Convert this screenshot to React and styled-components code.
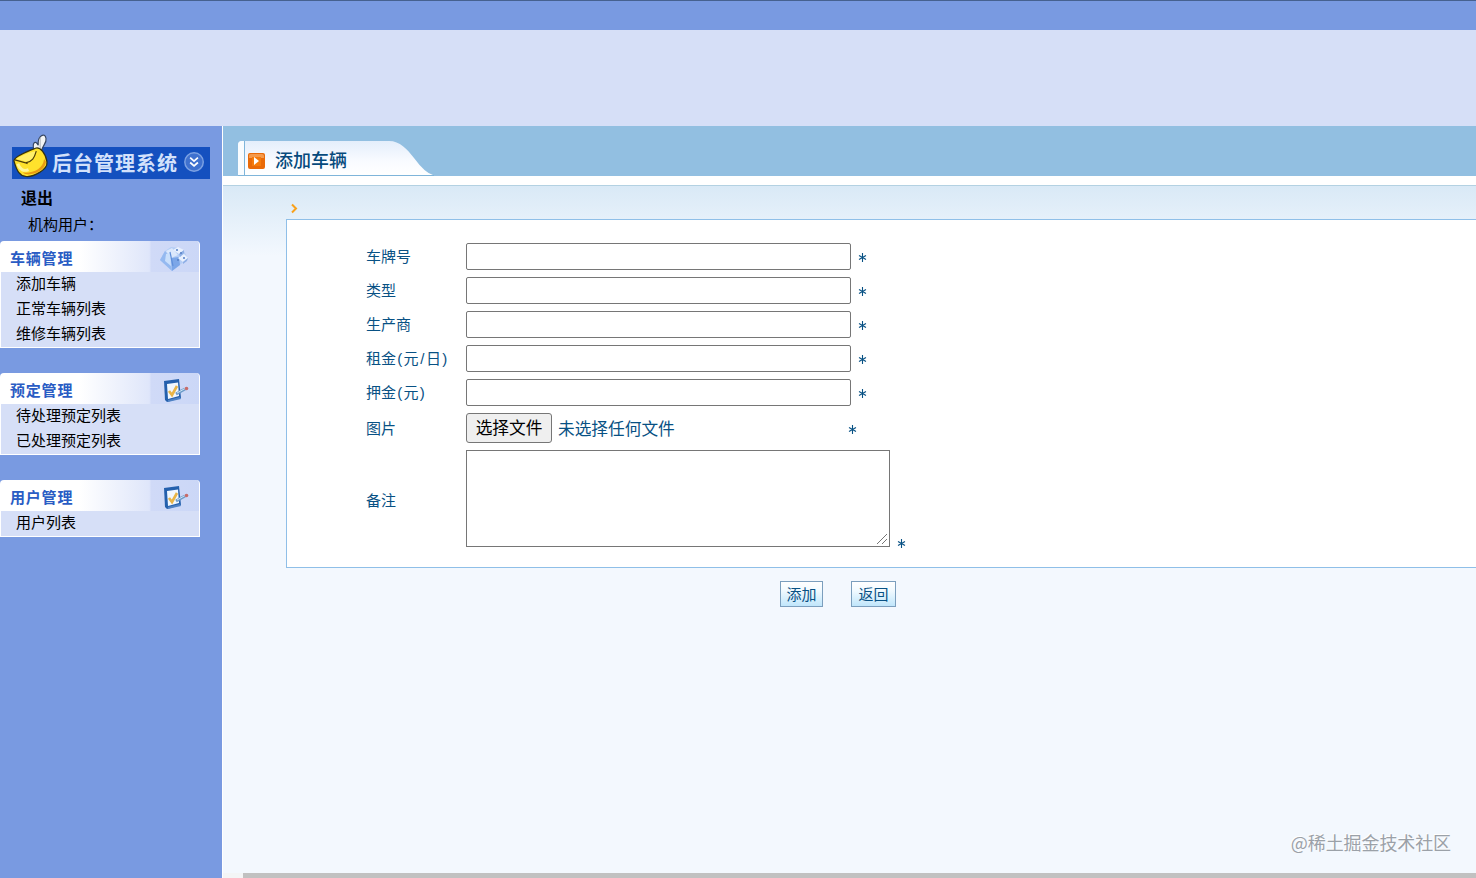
import React from "react";
import styled, { createGlobalStyle } from "styled-components";

const GlobalStyle = createGlobalStyle`
  * {
    box-sizing: border-box;
  }

  body {
    margin: 0;
    overflow: hidden;
    background: #f3f8fe;
    font-family: "Liberation Sans", "Noto Sans CJK SC", sans-serif;
    font-size: 15px;
    color: #000;
  }
`;

const Page = styled.div`
  display: flex;
  flex-direction: column;
  width: 100%;
  height: 100vh;
`;

const TopBar = styled.div`
  flex: none;
  height: 30px;
  border-top: 1px solid #46618f;
  background: #799ae1;
`;

const Banner = styled.div`
  flex: none;
  height: 96px;
  background: #d6dff7;
`;

const Columns = styled.div`
  display: flex;
  flex: 1;
  min-height: 0;
`;

/* sidebar */

const Sidebar = styled.aside`
  flex: none;
  width: 223px;
  padding-top: 7px;
  border-right: 1px solid #fff;
  background: #799ae1;
`;

const Logo = styled.div`
  display: flex;
  align-items: flex-end;
  width: 198px;
  height: 46px;
  margin-left: 12px;
  background: linear-gradient(#1450bf, #1450bf) 0 14px / 198px 32px no-repeat;
`;

const LogoText = styled.span`
  flex: 1;
  padding-left: 3px;
  line-height: 32px;
  font-family: "Noto Sans CJK SC", sans-serif;
  font-size: 20px;
  font-weight: bold;
  letter-spacing: 1px;
  white-space: nowrap;
  color: #d3e1fb;
`;

const Exit = styled.div`
  height: 36px;
  padding-left: 21px;
  line-height: 39px;
  font-size: 16px;
  font-weight: bold;
`;

const OrgUser = styled.div`
  height: 26px;
  padding-left: 28px;
  line-height: 20px;
`;

const Group = styled.section`
  width: 200px;
  margin-bottom: 25px;
`;

const GroupHead = styled.div`
  display: flex;
  align-items: center;
  justify-content: space-between;
  height: 31px;
  padding: 4px 10px 0;
  border-right: 1px solid #fff;
  border-radius: 4px 4px 0 0;
  background: linear-gradient(90deg, #fff 0, #fff 40%, #dfe6fa 75%, #d0daf7 76%, #cbd7f7 100%);
`;

const GroupTitle = styled.span`
  padding-bottom: 2px;
  font-weight: bold;
  letter-spacing: 0.8px;
  color: #2a5cc4;
`;

const GroupBody = styled.div`
  padding-left: 15px;
  border: 1px solid #fff;
  border-top: 0;
  background: #d6dff7;
`;

const MenuItem = styled.div`
  height: 25px;
  line-height: 24px;
`;

/* right side */

const Main = styled.main`
  display: flex;
  flex: 1;
  flex-direction: column;
  min-width: 0;
  background: linear-gradient(#d9e9f6, #f3f8fe 70px) 0 60px no-repeat #f3f8fe;
`;

const TabBar = styled.div`
  flex: none;
  height: 50px;
  padding: 15px 0 0 15px;
  background: #92bfe1;
`;

const Tab = styled.div`
  display: grid;
  width: 200px;
  height: 35px;

  > * {
    grid-area: 1 / 1;
  }
`;

const TabTitle = styled.div`
  display: flex;
  align-items: center;
  gap: 10px;
  padding: 3px 0 0 10px;
  font-size: 18px;
  font-weight: 500;
  font-family: "Noto Sans CJK SC", sans-serif;
  line-height: 30px;
  color: #064a7c;

  span {
    padding-bottom: 2px;
  }
`;

const Rule = styled.div`
  flex: none;
  height: 10px;
  border-bottom: 1px solid #b3d1e2;
  background: #fff;
`;

const Crumb = styled.div`
  flex: none;
  height: 33px;
  padding: 17px 0 0 67px;
  line-height: 0;
`;

const Panel = styled.form`
  flex: none;
  height: 349px;
  margin-left: 63px;
  padding: 19px 0 0 79px;
  border: 1px solid #8fbfe8;
  border-right: 0;
  background: #fff;
  color: #085184;
`;

const Row = styled.div`
  display: flex;
  align-items: center;
  height: ${(p) => p.$height || 34}px;
`;

const Label = styled.label`
  flex: none;
  width: 100px;
  padding-bottom: ${(p) => (p.$low ? 0 : 2)}px;
  padding-top: ${(p) => (p.$low ? 2 : 0)}px;
  white-space: nowrap;
`;

const Half = styled.span`
  display: inline-block;
  width: 7.5px;
  text-align: center;
`;

const TextInput = styled.input`
  width: 385px;
  height: 27px;
  border: 1px solid #767676;
  border-radius: 2px;
  background: #fff;
  outline: 0;
`;

const FileField = styled.div`
  display: flex;
  align-items: center;
  gap: 6px;
  width: 375px;
  font-size: 16.7px;
`;

const FileButton = styled.button`
  width: 86px;
  height: 30px;
  padding: 0 0 2px;
  border: 1px solid #767676;
  border-radius: 3px;
  background: #efefef;
  font: inherit;
  color: #000;
`;

const TextArea = styled.textarea`
  width: 424px;
  height: 97px;
  border: 1px solid #767676;
  background: #fff;
  outline: 0;
  resize: both;

  &::-webkit-resizer {
    background: linear-gradient(
      135deg,
      transparent 47%,
      #767676 47%,
      #767676 53%,
      transparent 53%,
      transparent 72%,
      #767676 72%,
      #767676 78%,
      transparent 78%
    ) 3px 3px / 10px 10px no-repeat;
  }
`;

const Star = styled.svg`
  flex: none;
  width: 9px;
  height: 9px;
  margin: ${(p) => (p.$bottom ? "90px 0 0 7px" : "3px 0 0 7px")};
`;

const Actions = styled.div`
  display: flex;
  flex: none;
  gap: 28px;
  padding: 13px 0 0 557px;
`;

const Action = styled.button`
  width: ${(p) => p.$width}px;
  height: 26px;
  padding: 2px 0 0;
  border: 1px solid #7b9ebd;
  background: linear-gradient(#fff, #f2faff 35%, #c0e6fb);
  font: inherit;
  line-height: 22px;
  color: #085184;
`;

const Watermark = styled.div`
  margin: auto 25px 19px auto;
  line-height: 24px;
  font-family: "Noto Sans CJK SC", sans-serif;
  font-size: 18px;
  letter-spacing: -0.1px;
  color: #9ba1a8;
  text-shadow: -1px -1px 0 #fff;
`;

const Scrollbar = styled.div`
  flex: none;
  height: 5px;
  border-left: 20px solid #f3f5f6;
  background: #c1c1c1;
`;

const BrandMark = () => (
  <svg width="38" height="46" viewBox="0 0 38 46">
    <path d="M23 19C20 9 24 6 27 12C26 2 34-2 35 5C36 10 31 12 30 19Z" fill="#f2f4f4" stroke="#344461" strokeWidth="1.2" />
    <path d="M29 4L29 17" stroke="#a8afb6" />
    <path d="M2 28C2 23 20 17 24 15C29 13 35 21 36 29C37 37 22 45 14 44C8 43 5 39 2 28Z" fill="#ffe22c" stroke="#343211" strokeWidth="1.3" />
    <path d="M4 26C12 21 19 19 24 18C23 25 21 28 16 29Z" fill="#fff06a" />
    <path d="M3 27L14 30C21 29 23 25 25 18M14 30L16 31" fill="none" stroke="#4c3c08" strokeWidth="1.2" />
    <path d="M33 26C32 36 22 41 11 40C16 45 34 40 35 29Z" fill="#e99c13" />
    <path d="M6 31C8 37 12 39 17 37" fill="none" stroke="#fff799" strokeWidth="3" />
  </svg>
);

const FoldIcon = () => (
  <svg width="33" height="32" viewBox="0 0 33 32">
    <circle cx="16.5" cy="15" r="9.5" fill="#3f71cf" stroke="#7ca1e3" strokeWidth="1.5" />
    <path d="M12.5 10.5L16.5 14L20.5 10.5M12.5 15.5L16.5 19L20.5 15.5" fill="none" stroke="#fff" strokeWidth="1.8" />
  </svg>
);

const CubesIcon = () => (
  <svg width="30" height="26" viewBox="0 0 30 26">
    <path d="M1 14L6 5L12 1L20 2L25 5L29 13L22 18L13 25Z" fill="#b4cdf5" />
    <path d="M1 14L6 5L10 10L13 25Z" fill="#94b9f0" />
    <path d="M12 12L20 11L21 19L13 25Z" fill="#7ba6e8" />
    <path d="M7 5L13 2L19 9L12 12Z" fill="#dbe8fc" />
    <path d="M7 8L11 7L12 20L6 15Z" fill="#c9dffb" />
    <path d="M11 6L14 20" stroke="#5f8fda" strokeWidth="1.2" />
    <path d="M14 4L19 1L25 4L20 8ZM19 12L25 8L29 12L24 16Z" fill="#e8f0fe" />
    <path d="M20 8L25 4V7L21 11ZM24 16L29 12L28 15L24 18Z" fill="#8fb0e6" />
    <g fill="#547fc5">
      <circle cx="18" cy="4" r="1" />
      <circle cx="22" cy="7" r="1" />
      <circle cx="25" cy="12" r="1" />
      <circle cx="19" cy="14" r="1" />
    </g>
  </svg>
);

const NoteIcon = () => (
  <svg width="26" height="26" viewBox="0 0 26 26">
    <path d="M1 3L16 1L18 20L4 24L2 22Z" fill="#2460ad" />
    <path d="M4 6L15 4.5L16 18L5 21Z" fill="#f1f8ff" />
    <path d="M5 22L17 19L18 21L5 24Z" fill="#4f82c4" />
    <path d="M6 13L9 17L14 8" fill="none" stroke="#e8b548" strokeWidth="2.6" />
    <path d="M13 16L22 11" stroke="#6e9cc9" strokeWidth="3" />
    <path d="M14 15L22 10.5" stroke="#cce4f6" />
    <circle cx="23.5" cy="10.5" r="1.8" fill="#c76b69" />
  </svg>
);

const TabShape = () => (
  <svg width="200" height="35" viewBox="0 0 200 35">
    <defs>
      <linearGradient id="tabFill" x1="0" y1="0" x2="0" y2="1">
        <stop offset="0" stopColor="#e4eefb" />
        <stop offset="0.6" stopColor="#f9fbff" />
        <stop offset="1" stopColor="#fff" />
      </linearGradient>
    </defs>
    <path d="M0 34V4Q0 0 4 0H151C162 0 169 8 176 17Q187 32 195 34Z" fill="url(#tabFill)" />
    <path d="M0 34V4Q0 0 4 0H6V34Z" fill="#f9fcff" />
    <path d="M6.5 0V34M0 34.5H196" stroke="#7fb5da" />
  </svg>
);

const PlayIcon = () => (
  <svg width="17" height="17" viewBox="0 0 17 17">
    <rect y="1" width="17" height="16" rx="2" fill="#e96a08" />
    <path d="M1 3Q1 2 3 2H14Q16 2 16 4V6H1Z" fill="#f59a4b" />
    <rect x="4" y="5" width="9" height="9" fill="#f57b0c" />
    <path d="M6 5L11 9L6 13Z" fill="#fff" />
  </svg>
);

const Required = ({ bottom }) => (
  <Star viewBox="0 0 9 9" $bottom={bottom}>
    <path d="M4.5 0V9M1 2.5L8 6.5M8 2.5L1 6.5" stroke="#085184" strokeWidth="1.1" />
  </Star>
);

const groups = [
  { title: "车辆管理", icon: CubesIcon, items: ["添加车辆", "正常车辆列表", "维修车辆列表"] },
  { title: "预定管理", icon: NoteIcon, items: ["待处理预定列表", "已处理预定列表"] },
  { title: "用户管理", icon: NoteIcon, items: ["用户列表"] },
];

const fields = ["车牌号", "类型", "生产商", "租金(元/日)", "押金(元)"];

// latin punctuation takes half the width of a chinese character
const renderLabel = (text) =>
  text.split("").map((c, i) => ("()/".includes(c) ? <Half key={i}>{c}</Half> : c));

export default function App() {
  return (
    <Page>
      <GlobalStyle />
      <TopBar />
      <Banner />
      <Columns>
        <Sidebar>
          <Logo>
            <BrandMark />
            <LogoText>后台管理系统</LogoText>
            <FoldIcon />
          </Logo>
          <Exit>退出</Exit>
          <OrgUser>机构用户：</OrgUser>
          {groups.map(({ title, icon: Icon, items }) => (
            <Group key={title}>
              <GroupHead>
                <GroupTitle>{title}</GroupTitle>
                <Icon />
              </GroupHead>
              <GroupBody>
                {items.map((item) => (
                  <MenuItem key={item}>{item}</MenuItem>
                ))}
              </GroupBody>
            </Group>
          ))}
        </Sidebar>
        <Main>
          <TabBar>
            <Tab>
              <TabShape />
              <TabTitle>
                <PlayIcon />
                <span>添加车辆</span>
              </TabTitle>
            </Tab>
          </TabBar>
          <Rule />
          <Crumb>
            <svg width="8" height="11" viewBox="0 0 8 11">
              <path d="M2 1.5L6 5.5L2 9.5" fill="none" stroke="#f9a11b" strokeWidth="2" />
            </svg>
          </Crumb>
          <Panel>
            {fields.map((field) => (
              <Row key={field}>
                <Label>{renderLabel(field)}</Label>
                <TextInput />
                <Required />
              </Row>
            ))}
            <Row $height={38}>
              <Label>图片</Label>
              <FileField>
                <FileButton type="button">选择文件</FileButton>
                未选择任何文件
              </FileField>
              <Required />
            </Row>
            <Row $height={103}>
              <Label $low>备注</Label>
              <TextArea />
              <Required bottom />
            </Row>
          </Panel>
          <Actions>
            <Action $width={43}>添加</Action>
            <Action $width={45}>返回</Action>
          </Actions>
          <Watermark>@稀土掘金技术社区</Watermark>
          <Scrollbar />
        </Main>
      </Columns>
    </Page>
  );
}
